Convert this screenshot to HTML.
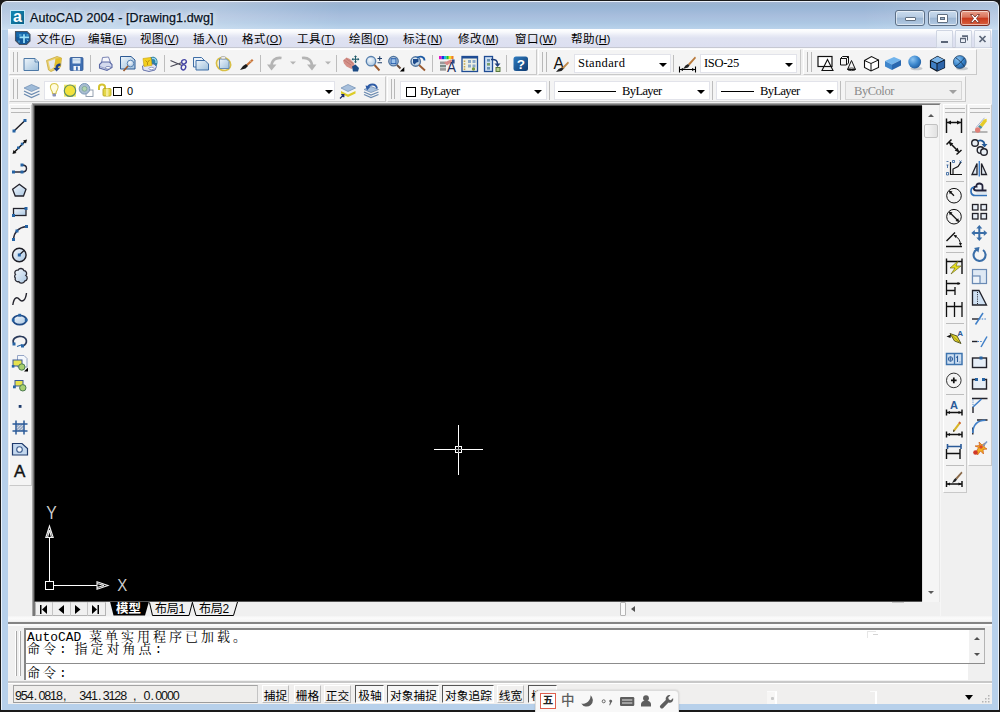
<!DOCTYPE html>
<html lang="zh-CN">
<head>
<meta charset="utf-8">
<title>AutoCAD 2004 - [Drawing1.dwg]</title>
<style>
*{box-sizing:border-box;margin:0;padding:0}
html,body{width:1000px;height:712px;overflow:hidden;background:#b9d1ea}
body{position:relative;font-family:"Liberation Sans","Noto Sans CJK SC",sans-serif;font-size:12px;color:#000}
.abs{position:absolute}
#frame{left:0;top:0;width:1000px;height:712px;background:#1a1a1a;}
#frame2{left:1px;top:1px;width:998px;height:709px;background:#b7d0ea;border-radius:6px 6px 0 0;border:1px solid #eaf2fb;border-bottom-color:#b7d0ea}
#title{left:2px;top:2px;width:996px;height:28px;border-radius:5px 5px 0 0;background:linear-gradient(90deg,rgba(255,255,255,.24) 0,rgba(255,255,255,.22) 215px,rgba(255,255,255,0) 340px,rgba(255,255,255,0) 860px,rgba(255,255,255,.22) 1000px),linear-gradient(#a3b5d1 0,#98b4d2 3px,#9db8d8 8px,#a8bedd 14px,#acc7e3 21px,#b7d1ea 26px,#bcd4ec 28px)}
#topline{display:none}
#titletext{left:30px;top:9.5px;font-size:12.5px;line-height:16px;color:#06121f;white-space:nowrap;letter-spacing:0.1px;text-shadow:0 0 5px #fff,0 0 8px #eaf2fa;-webkit-text-stroke:0.25px #06121f}
#menubar{left:8px;top:29px;width:984px;height:20px;background:linear-gradient(#ffffff 0,#f8f9fc 3px,#eaecf6 6px,#dfe2f1 9px,#dcdff0 18px,#c6c8d2 18px,#c6c8d2 19px,#fafafa 19px)}
.mi{position:absolute;top:31px;font-size:11.500px;line-height:16px;white-space:nowrap;color:#000;letter-spacing:0.500px}
.mi u{text-decoration:underline;text-underline-offset:1px}
#client{left:8px;top:49px;width:984px;height:655px;background:#f0f0f0}
.tb{position:absolute;background:#f4f4f4;border-right:1px solid #c9c9c9;border-bottom:1px solid #c9c9c9;border-top:1px solid #fff;border-left:1px solid #fff}
.grip{position:absolute;width:1px;background:#b8b8b8}
.sep{position:absolute;width:1px;background:#bdbdbd}
.combo{position:absolute;background:#fff;border:1px solid #e2e3ea;font-family:"Liberation Serif","Noto Serif CJK SC",serif;font-size:12.500px;line-height:17px;white-space:nowrap;letter-spacing:0.350px}
.arr{position:absolute;width:0;height:0;border-left:4px solid transparent;border-right:4px solid transparent;border-top:4px solid #000}


.cmd{position:absolute;font-family:"Liberation Mono","Noto Serif CJK SC",monospace;font-size:12.900px;line-height:14px;white-space:pre;color:#000}
.cmd .cj{font-size:13px;letter-spacing:3px}
.sb{position:absolute;top:685px;height:18px;font-size:11.700px;line-height:20px;text-align:center;white-space:nowrap;overflow:hidden;border:1px solid transparent;border-left-color:#fff;border-top-color:#fff;border-right-color:#bdbdbd;border-bottom-color:#bdbdbd;color:#000;background:#f0efee}
.sb.on{text-indent:1px;border-left-color:#555;border-top-color:#555;border-right-color:#fff;border-bottom-color:#fff;background:#f6f6f6}

.cap{border:1px solid #5c6f86;border-radius:3px;background:linear-gradient(#c9dbee 0,#b6cbe2 45%,#9cb6d3 50%,#b3cae3 100%);box-shadow:inset 0 0 0 1px rgba(255,255,255,.55)}
.mdib{width:17px;height:18px;border:1px solid #cfd5e2;background:linear-gradient(#f7f9fc,#e4e9f3);border-radius:1px}
.coord{font-family:"Liberation Sans",sans-serif;font-size:12.500px;line-height:16px;white-space:pre;color:#111}
.coord i{display:inline-block;width:5.850px;text-align:center;font-style:normal}
.mi .p{letter-spacing:0.200px;font-size:10.800px}
</style>
</head>
<body>
<div id="frame" class="abs"></div><div id="frame2" class="abs"></div>
<div id="title" class="abs"></div>
<div id="topline" class="abs"></div>
<div id="titletext" class="abs">AutoCAD 2004 - [Drawing1.dwg]</div>
<div id="menubar" class="abs"></div>
<!-- ===== title buttons ===== -->
<div class="abs" style="left:10px;top:10px;width:15px;height:15px;background:linear-gradient(135deg,#1488b2,#0a6088);border:1px solid #c4e8f8"></div>
<div class="abs" style="left:11.500px;top:6.500px;width:12px;font-size:16px;line-height:20px;font-weight:bold;color:#fff;text-align:center">a</div>
<div class="abs cap" style="left:895px;top:10px;width:30px;height:16px"></div>
<div class="abs cap" style="left:928px;top:10px;width:30px;height:16px"></div>
<div class="abs cap" style="left:960px;top:10px;width:30px;height:16px;background:linear-gradient(#e9a08c 0,#d9735b 45%,#c8381c 50%,#d8603e 100%);border-color:#7a2c22"></div>
<div class="abs" style="left:905px;top:17px;width:11px;height:4px;background:#fff;border:1px solid #5f6e80;border-radius:1px"></div>
<div class="abs" style="left:937px;top:14px;width:11px;height:9px;background:#fff;border:1px solid #5f6e80;border-radius:1px"></div>
<div class="abs" style="left:940px;top:17px;width:5px;height:3px;background:#9cb0c8;border:1px solid #5f6e80"></div>
<svg class="abs" style="left:968px;top:12px" width="14" height="13" viewBox="0 0 14 13"><path d="M2.500 2.500L4.800 2.500L7 5L9.200 2.500L11.500 2.500L8.500 6.500L11.500 10.500L9.200 10.500L7 8L4.800 10.500L2.500 10.500L5.500 6.500Z" fill="#fff" stroke="#7a3a30" stroke-width="0.900" stroke-linejoin="round"/></svg>
<!-- MDI icon + buttons -->
<svg class="abs" style="left:14px;top:30px" width="18" height="16" viewBox="14 30 18 16"><path d="M15.500 31.500H27L30 34.500V41L26.500 44.500H19.500L15.500 40.500Z" fill="#125a9c" stroke="#4a5666" stroke-width="1.100"/><path d="M16.500 32.500H26.500L29 35V37H16.500Z" fill="#1c74b8" opacity="0.600"/><path d="M19.500 37.400H29M24 34.200V43" stroke="#9fe2f8" stroke-width="1.700" fill="none"/><path d="M19 35H21.500M26.500 35H28.500M19 40.500V42.500M27 39.500L28 41" stroke="#6cc0ea" stroke-width="1" fill="none"/></svg>
<div class="abs mdib" style="left:936px;top:30px"></div><div class="abs mdib" style="left:955px;top:30px"></div><div class="abs mdib" style="left:974px;top:30px"></div>
<div class="abs" style="left:941px;top:41px;width:7px;height:2px;background:#5b6678"></div>
<svg class="abs" style="left:955px;top:31px" width="36" height="17" viewBox="0 0 36 17"><path d="M7.500 5.500H12.500V9.500M5.500 7.500H10.500V11.500H5.500Z" fill="none" stroke="#5b6678" stroke-width="1"/><path d="M7 5H13M5 7.500H11" stroke="#5b6678" stroke-width="1.600"/><path d="M24.500 5L30.500 11M30.500 5L24.500 11" stroke="#5b6678" stroke-width="1.700"/></svg>


<!-- menu items -->
<div class="mi" style="left:37px">文件<span class="p">(<u>F</u>)</span></div>
<div class="mi" style="left:88px">编辑<span class="p">(<u>E</u>)</span></div>
<div class="mi" style="left:140px">视图<span class="p">(<u>V</u>)</span></div>
<div class="mi" style="left:193px">插入<span class="p">(<u>I</u>)</span></div>
<div class="mi" style="left:242px">格式<span class="p">(<u>O</u>)</span></div>
<div class="mi" style="left:297px">工具<span class="p">(<u>T</u>)</span></div>
<div class="mi" style="left:349px">绘图<span class="p">(<u>D</u>)</span></div>
<div class="mi" style="left:403px">标注<span class="p">(<u>N</u>)</span></div>
<div class="mi" style="left:458px">修改<span class="p">(<u>M</u>)</span></div>
<div class="mi" style="left:515px">窗口<span class="p">(<u>W</u>)</span></div>
<div class="mi" style="left:571px">帮助<span class="p">(<u>H</u>)</span></div>
<div id="client" class="abs"></div>

<!-- ===== toolbars row 1 ===== -->
<div class="tb" style="left:9px;top:49px;width:528px;height:26px"></div>
<div class="grip" style="left:13px;top:52px;height:20px"></div><div class="grip" style="left:17px;top:52px;height:20px"></div>
<div class="tb" style="left:538px;top:49px;width:263px;height:26px"></div>
<div class="grip" style="left:542px;top:52px;height:20px"></div><div class="grip" style="left:546px;top:52px;height:20px"></div>
<div class="tb" style="left:803px;top:49px;width:174px;height:26px"></div>
<div class="grip" style="left:807px;top:52px;height:20px"></div><div class="grip" style="left:811px;top:52px;height:20px"></div>
<div class="sep" style="left:90px;top:55px;height:17px"></div>
<div class="sep" style="left:164px;top:55px;height:17px"></div>
<div class="sep" style="left:260px;top:55px;height:17px"></div>
<div class="sep" style="left:336px;top:55px;height:17px"></div>
<div class="sep" style="left:432px;top:55px;height:17px"></div>
<div class="sep" style="left:506px;top:55px;height:17px"></div>
<div class="sep" style="left:673px;top:55px;height:17px"></div>
<div class="combo" style="left:574px;top:54px;width:97px;height:19px;padding-left:3px">Standard</div><div class="arr" style="left:658.500px;top:62.500px"></div>
<div class="combo" style="left:700px;top:54px;width:97px;height:19px;padding-left:3px;letter-spacing:-0.300px">ISO-25</div><div class="arr" style="left:785px;top:62.500px"></div>
<!-- ===== toolbars row 2 ===== -->
<div class="tb" style="left:9px;top:76px;width:377px;height:26px"></div>
<div class="grip" style="left:13px;top:79px;height:20px"></div><div class="grip" style="left:17px;top:79px;height:20px"></div>
<div class="tb" style="left:387px;top:76px;width:579px;height:26px"></div>
<div class="grip" style="left:391px;top:79px;height:20px"></div><div class="grip" style="left:394px;top:79px;height:20px"></div>
<div class="combo" style="left:44px;top:81px;width:291px;height:19px;line-height:19px"></div><div class="arr" style="left:325px;top:90px"></div>
<div class="combo" style="left:400px;top:81px;width:147px;height:19px;padding-left:19px;line-height:19px;letter-spacing:-0.600px">ByLayer</div><div class="arr" style="left:534px;top:90px"></div>
<div class="combo" style="left:554px;top:81px;width:156px;height:19px;padding-left:67px;line-height:19px;letter-spacing:-0.600px">ByLayer</div><div class="arr" style="left:697px;top:90px"></div>
<div class="combo" style="left:716px;top:81px;width:122px;height:19px;padding-left:43px;line-height:19px;letter-spacing:-0.600px">ByLayer</div><div class="arr" style="left:826px;top:90px"></div>
<div class="combo" style="left:845px;top:81px;width:117px;height:19px;padding-left:8px;background:#f0f0f0;color:#8a8a8a;border-color:#d5d5d5;line-height:19px;letter-spacing:-0.450px">ByColor</div><div class="arr" style="left:949px;top:90px;border-top-color:#a0a0a0"></div>
<div class="sep" style="left:549px;top:81px;height:19px"></div>
<div class="sep" style="left:712px;top:81px;height:19px"></div>
<div class="sep" style="left:840px;top:81px;height:19px"></div>
<div class="abs" style="left:406px;top:86.500px;width:10px;height:10px;border:1px solid #000;background:#fff"></div>
<div class="abs" style="left:558px;top:91px;width:58px;height:1px;background:#000"></div>
<div class="abs" style="left:721px;top:91px;width:33px;height:1px;background:#000"></div>
<div class="abs" style="left:113px;top:86.500px;width:9px;height:9px;border:1.500px solid #000;background:#fff"></div>
<div class="abs" style="left:127px;top:82.500px;font-family:'Liberation Sans',sans-serif;font-size:11px;line-height:17px">0</div>

<!-- ===== side toolbars ===== -->
<div class="tb" style="left:9px;top:104px;width:23px;height:382px"></div>
<div class="abs" style="left:11px;top:108px;width:19px;height:1px;background:#b8b8b8"></div><div class="abs" style="left:11px;top:112px;width:19px;height:1px;background:#b8b8b8"></div>
<div class="tb" style="left:943px;top:104px;width:24px;height:389px"></div>
<div class="abs" style="left:945px;top:108px;width:20px;height:1px;background:#b8b8b8"></div><div class="abs" style="left:945px;top:112px;width:20px;height:1px;background:#b8b8b8"></div>
<div class="tb" style="left:968px;top:104px;width:24px;height:362px"></div>
<div class="abs" style="left:970px;top:108px;width:20px;height:1px;background:#b8b8b8"></div><div class="abs" style="left:970px;top:112px;width:20px;height:1px;background:#b8b8b8"></div>
<div class="abs" style="left:946px;top:181px;width:18px;height:1px;background:#bdbdbd"></div>
<div class="abs" style="left:946px;top:252px;width:18px;height:1px;background:#bdbdbd"></div>
<div class="abs" style="left:946px;top:323px;width:18px;height:1px;background:#bdbdbd"></div>
<div class="abs" style="left:946px;top:394px;width:18px;height:1px;background:#bdbdbd"></div>
<div class="abs" style="left:946px;top:465px;width:18px;height:1px;background:#bdbdbd"></div>
<!-- ===== MDI client border + scrollbars ===== -->
<div class="abs" style="left:32px;top:103px;width:909px;height:516px;background:#f0f0f0;border-top:1px solid #a6a6a6;border-left:1px solid #a6a6a6;border-right:1px solid #f6f6f6;border-bottom:1px solid #f6f6f6"></div>
<div class="abs" style="left:33px;top:104px;width:907px;height:514px;border-top:2px solid #787878;border-left:2px solid #787878;border-right:1px solid #ececec;border-bottom:1px solid #f0f0f0"></div>
<div id="vscroll" class="abs" style="left:922px;top:105px;width:18px;height:497px;background:#f5f5f5;border-left:1px solid #fbfbfb;border-right:1px solid #e6e6e6"></div>
<div class="abs" style="left:924px;top:124px;width:14px;height:14px;border:1px solid #c2c2c2;border-radius:2px;background:linear-gradient(90deg,#f8f8f8,#e2e2e2)"></div>
<div class="abs" style="left:928px;top:113.500px;width:0;height:0;border-left:3.500px solid transparent;border-right:3.500px solid transparent;border-bottom:3.500px solid #5a5a5a"></div>
<div class="abs" style="left:928px;top:591px;width:0;height:0;border-left:3.500px solid transparent;border-right:3.500px solid transparent;border-top:3.500px solid #5a5a5a"></div>
<div id="hrow" class="abs" style="left:35px;top:602px;width:905px;height:16px;background:#f0f0f0"></div>

<!-- ===== top toolbar icons ===== -->
<svg class="abs" style="left:0;top:49px" width="1000" height="55" viewBox="0 49 1000 55">
<defs>
<linearGradient id="gpage" x1="0" y1="0" x2="1" y2="1"><stop offset="0" stop-color="#eef5fb"/><stop offset="1" stop-color="#9fc0dc"/></linearGradient>
<radialGradient id="gsph" cx="0.35" cy="0.3" r="0.8"><stop offset="0" stop-color="#8cc4f2"/><stop offset="0.55" stop-color="#3a86cc"/><stop offset="1" stop-color="#1d5596"/></radialGradient>
<radialGradient id="glens" cx="0.4" cy="0.35" r="0.7"><stop offset="0" stop-color="#f4f8fc"/><stop offset="1" stop-color="#a8c4de"/></radialGradient>
<linearGradient id="ghelp" x1="0" y1="0" x2="1" y2="1"><stop offset="0" stop-color="#2f7cc0"/><stop offset="1" stop-color="#0e3a70"/></linearGradient>
</defs>
<!-- new -->
<path d="M24 58.500H35L38.500 62V70.500H24Z" fill="url(#gpage)" stroke="#4c78a6" stroke-width="1"/><path d="M35 58.500V62H38.500" fill="#c7d9ea" stroke="#4c78a6" stroke-width="0.800"/>
<!-- open -->
<path d="M46.500 60.500L57 56.500L61.500 58L60.500 67L51 71.500L48.500 70Z" fill="#e9d070" stroke="#c9a93a" stroke-width="0.800"/>
<path d="M48.500 61.500L55.500 59L54 67L50.500 69.500Z" fill="#e8eaee"/>
<path d="M55.500 58.500L61 58L60 67L54.500 66Z" fill="#e2bf2c"/>
<path d="M60.500 63.500C57 63.500 55.500 65.500 55.500 68L53.500 68L56.500 71.500L60 68L58 68C58 66.500 59 65.800 60.500 65.800Z" fill="#1e3f86"/>
<!-- save -->
<rect x="70" y="57.500" width="13" height="13" rx="1" fill="#3f6fb2" stroke="#2f5794" stroke-width="0.800"/><rect x="72.500" y="58" width="8" height="5.500" fill="#d7e6f4"/><path d="M72.500 60H80.500" stroke="#a9c3e0" stroke-width="0.700"/><rect x="73.500" y="66" width="6.500" height="4.500" fill="#eef3fa"/><rect x="76" y="66.500" width="1.800" height="4" fill="#3f6fb2"/>
<!-- print -->
<path d="M101.500 63L102.500 57.500L108.500 57L110.500 62.500Z" fill="#f6f6fb" stroke="#7a84b4" stroke-width="1"/>
<path d="M99.500 64.500L102 62H109.500L112 64.500V67.500L107 70.500L99.500 68Z" fill="#d4daee" stroke="#5a68a4" stroke-width="1.100"/>
<path d="M100 66.500L107 69L111.500 66.500" stroke="#8a94c0" stroke-width="0.800" fill="none"/>
<ellipse cx="108" cy="67.800" rx="2.600" ry="1.300" fill="#fff" stroke="#5a68a4" stroke-width="0.700"/>
<!-- preview -->
<path d="M120.500 56.500H131L135 60V69H120.500Z" fill="url(#gpage)" stroke="#2d5a94" stroke-width="1"/>
<circle cx="130.500" cy="63.500" r="3.300" fill="url(#glens)" stroke="#5a84b4" stroke-width="1"/>
<path d="M128 66L123.500 71" stroke="#9a5a30" stroke-width="1.600"/>
<!-- publish -->
<path d="M150 57.500C154 55.500 158 58 157.500 63C157 67 154 69 151 68Z" fill="#2d83a8"/><path d="M152 58.500C155 58 156.500 60 156 63" stroke="#a4d8ec" stroke-width="1.300" fill="none"/>
<path d="M142.500 66L145 64H154L156.500 66.500L155 70L149 71.500L143 70Z" fill="#dfe3f3" stroke="#5a68a4" stroke-width="0.900"/>
<rect x="143.500" y="58" width="8" height="8" fill="#f2cf1e" stroke="#caa514" stroke-width="0.600" transform="rotate(-8 147 62)"/>
<path d="M145.500 60.500L147.500 62.500L149.500 60M147.500 62.500V65" stroke="#b88a10" stroke-width="0.900" fill="none"/>
<ellipse cx="151.500" cy="68.500" rx="2.600" ry="1.200" fill="#fff" stroke="#5a68a4" stroke-width="0.600"/>
<!-- cut -->
<path d="M170.500 60.500L182 65.500M170.500 66.500L182 62.500" stroke="#4a4a58" stroke-width="1.300"/>
<ellipse cx="184" cy="61.800" rx="2.400" ry="2" fill="none" stroke="#4646a4" stroke-width="1.400" transform="rotate(-25 184 61.800)"/>
<ellipse cx="183.500" cy="67.300" rx="2.200" ry="2.600" fill="none" stroke="#4646a4" stroke-width="1.400" transform="rotate(20 183.500 67.300)"/>
<!-- copy -->
<path d="M193.500 57.500H201.500L204.500 60.500V67H193.500Z" fill="#e9f1f9" stroke="#3f6ea6" stroke-width="1"/>
<path d="M196 60.500H205L208.500 64V70H196Z" fill="url(#gpage)" stroke="#3f6ea6" stroke-width="1"/>
<!-- paste -->
<ellipse cx="223.500" cy="64" rx="7.300" ry="6.300" fill="#f4efd4" stroke="#d8bf46" stroke-width="1.600" transform="rotate(25 223.500 64)"/>
<path d="M219.500 59H226.500L229 61.500V68.500H219.500Z" fill="url(#gpage)" stroke="#5a82b0" stroke-width="0.900"/>
<rect x="221" y="56.500" width="4.500" height="2.500" rx="1" fill="#eee" stroke="#9a9a9a" stroke-width="0.600"/>
<!-- matchprop brush -->
<path d="M246 64.500L252 59L253.500 60.500L247.500 66Z" fill="#c8743a"/><path d="M250 60.700L251.500 62.200" stroke="#f0d0a0" stroke-width="0.800"/>
<path d="M240 70L243 66L246 64L248 66L245.500 68.500Z" fill="#1c1c1c"/>
<!-- undo/redo -->
<path d="M281.500 58C275 57 271.500 61 271.500 66" stroke="#b4b4b4" stroke-width="2.600" fill="none"/><path d="M267 64.500H276.500L271.500 70.500Z" fill="#b4b4b4"/>
<path d="M290 61.500H296L293 64.500Z" fill="#b4b4b4"/>
<path d="M302 58C308.500 57 312 61 312 66" stroke="#b4b4b4" stroke-width="2.600" fill="none"/><path d="M307 64.500H316.500L312 70.500Z" fill="#b4b4b4"/>
<path d="M325 61.500H331L328 64.500Z" fill="#b4b4b4"/>
<!-- pan -->
<path d="M343 60.500L346.500 57.500L350 59L354 63L355 66.500L351.500 69L346.500 66.500L344 63.500Z" fill="#d49088"/>
<path d="M344 60L351 65M346 58.500L353 63.500" stroke="#b8706a" stroke-width="0.700"/>
<path d="M352 66.500L355.500 64.500L359 68L358 71.500H353Z" fill="#1c4a84"/>
<path d="M355.500 56V62.500M352.300 59.200H358.700" stroke="#1f5a6a" stroke-width="1.100"/><path d="M355.500 55.300L357 57H354ZM355.500 63.200L357 61.500H354ZM351.600 59.200L353.300 57.700V60.700ZM359.400 59.200L357.700 57.700V60.700Z" fill="#1f5a6a"/>
<!-- zoom realtime -->
<circle cx="371" cy="61.200" r="4.700" fill="url(#glens)" stroke="#5880ae" stroke-width="1.400"/><path d="M374.500 65L379.500 70.500" stroke="#9a5a30" stroke-width="1.900"/>
<path d="M377.500 58.500H382M379.700 56.200V60.800M377.500 62.800H382" stroke="#1f3f6a" stroke-width="1.100"/>
<!-- zoom window -->
<circle cx="393.500" cy="61.200" r="4.700" fill="url(#glens)" stroke="#50749e" stroke-width="1.400"/><rect x="391" y="58.700" width="5" height="5" fill="#9ec4ea" stroke="#1f57a8" stroke-width="1"/><path d="M397 65L400.500 68.500" stroke="#6a5040" stroke-width="1.900"/><path d="M404.300 67V71.500H399.800Z" fill="#000"/>
<!-- zoom previous -->
<circle cx="415.700" cy="61.500" r="4.700" fill="url(#glens)" stroke="#50749e" stroke-width="1.400"/><path d="M419 65L425 70.500" stroke="#9a5a30" stroke-width="1.900"/>
<path d="M413 59H418.500V62L416.500 62.500L414.500 64.500L413 63Z" fill="#1c4a8c"/><path d="M417 58C420 55.500 424.500 56.500 424.500 60.500" stroke="#1c5aa4" stroke-width="1.800" fill="none"/>
<!-- properties -->
<rect x="439" y="56" width="2.600" height="3.200" fill="#e010c0"/><rect x="441.600" y="56" width="2.400" height="3.200" fill="#2030e0"/><rect x="444" y="56" width="2.400" height="3.200" fill="#10c0e0"/><rect x="446.400" y="56" width="2.400" height="3.200" fill="#20c030"/><rect x="448.800" y="56" width="2.400" height="3.200" fill="#f0e020"/><rect x="451.200" y="56" width="2.300" height="3.200" fill="#f08020"/>
<rect x="440" y="61.500" width="6" height="2.600" fill="#9a9a9a"/><rect x="440" y="64.800" width="6" height="2.600" fill="#7c8c88"/><rect x="440" y="68.100" width="6" height="2.600" fill="#9a9a9a"/>
<path d="M444 62.500L451 59.500L453 61L447 65.500Z" fill="#d88a88"/>
<text x="451.500" y="71.800" font-family="Liberation Sans, sans-serif" font-size="15" fill="#1c2c5c" text-anchor="middle" textLength="9" lengthAdjust="spacingAndGlyphs">A</text><rect x="452" y="59.500" width="2.600" height="4" fill="#2c4a88"/>
<!-- design center -->
<rect x="462" y="56.500" width="15.500" height="15" fill="#eef0e4" stroke="#1f4c94" stroke-width="1.300"/><rect x="462" y="56.500" width="15.500" height="2" fill="#1f4c94"/>
<path d="M464.500 60.500V70" stroke="#c8a850" stroke-width="1.600" stroke-dasharray="1.500 1.200"/>
<rect x="468" y="60" width="3" height="3" fill="#8aa8c8"/><rect x="472.500" y="60" width="3" height="3" fill="#8aa8c8"/><rect x="468" y="64.500" width="3" height="3" fill="#8aa8c8"/><rect x="472.500" y="64.500" width="3" height="3" fill="#8aa8c8"/><circle cx="473.500" cy="69" r="1.700" fill="#7a9a40"/>
<!-- tool palettes -->
<rect x="484.500" y="56.500" width="8" height="15" fill="#cfe0f2" stroke="#1f4c94" stroke-width="1.300"/><rect x="487" y="59" width="3" height="2.600" fill="#6a94b8"/><rect x="487" y="63" width="3" height="2.600" fill="#7aa06a"/><rect x="487" y="67" width="3" height="2.600" fill="#6a94b8"/>
<path d="M491 59.500C496 59 497.500 61 497.500 64" stroke="#1f3f7c" stroke-width="1.500" fill="none"/><path d="M494.500 63.500H500.500L497.500 67Z" fill="#1f3f7c"/><rect x="496" y="67.500" width="4" height="4" fill="#b8d090" stroke="#4a6a30" stroke-width="0.900"/>
<!-- help -->
<rect x="513.500" y="56.500" width="14.500" height="14.500" rx="2.500" fill="url(#ghelp)"/>
<text x="520.800" y="68.500" font-family="Liberation Sans, sans-serif" font-weight="bold" font-size="13.500" fill="#fff" text-anchor="middle">?</text>
<!-- text style -->
<text x="558.800" y="68.500" font-family="Liberation Sans, sans-serif" font-size="17" fill="#111" text-anchor="middle" textLength="10.500" lengthAdjust="spacingAndGlyphs">A</text>
<path d="M568 61.500L562 67.500L563.500 69L569 63Z" fill="#c08a4a"/><path d="M556 72L558.500 69L562 67.500L563.500 69L561.500 71Z" fill="#222"/>
<!-- dim style -->
<path d="M695 56.500L688 64L689.500 65.500L696 58Z" fill="#b8783a"/><path d="M683 69L685.500 65.500L688 64L689.500 65.500L688 67.500Z" fill="#222"/>
<path d="M679.500 69.500H695.500M679.500 66.500V72.500M695.500 66.500V72.500" stroke="#000" stroke-width="1.100"/><path d="M680 69.500L683 68V71ZM695 69.500L692 68V71Z" fill="#000"/>
<!-- shade toolbar -->
<rect x="818" y="56.500" width="14" height="10" fill="#fff" stroke="#111" stroke-width="1.200"/><path d="M827.500 59.500L822 70.500H833Z" fill="none" stroke="#111" stroke-width="1.100"/><path d="M824 66.500H831" stroke="#111" stroke-width="0.800"/>
<path d="M840.500 58.500H846.500V65H840.500ZM840.500 58.500L842.500 56.500H848.500V63L846.500 65M846.500 58.500L848.500 56.500" fill="none" stroke="#111" stroke-width="1"/><path d="M851.500 60.500L847.500 69.500H855.500Z" fill="#f4f4f4" stroke="#111" stroke-width="1"/><ellipse cx="851.500" cy="69.300" rx="4" ry="1.300" fill="none" stroke="#111" stroke-width="0.800"/>
<path d="M864.500 60.500L871.500 56.500L878.500 60V67.500L871 71L864.500 67.500Z" fill="#fff" stroke="#111" stroke-width="1.100"/><path d="M864.500 60.500L871 63.500L878.500 60M871 63.500V71" fill="none" stroke="#111" stroke-width="1"/>
<path d="M885 61L894 57L901 60L892 64.500Z" fill="#72b4ec"/><path d="M885 61L892 64.500V70L885 66.500Z" fill="#3f86cc"/><path d="M892 64.500L901 60V65.500L892 70Z" fill="#2a68b0"/>
<ellipse cx="916.500" cy="68.500" rx="6" ry="1.800" fill="#c4c8cc"/><circle cx="914.700" cy="62" r="6.400" fill="url(#gsph)"/>
<path d="M930.500 60.500L937.500 56.500L944.500 60V67.500L937 71L930.500 67.500Z" fill="#3f7fc4" stroke="#0c1420" stroke-width="1.200"/><path d="M930.500 60.500L937.500 56.500L944.500 60L937 63.500Z" fill="#7ab4e8"/><path d="M937 63.500L944.500 60V67.500L937 71Z" fill="#2d64a8"/><path d="M930.500 60.500L937 63.500L944.500 60M937 63.500V71" fill="none" stroke="#0c1420" stroke-width="1"/>
<ellipse cx="962" cy="68.500" rx="6" ry="1.800" fill="#c4c8cc"/><circle cx="959.800" cy="62" r="6.400" fill="url(#gsph)" stroke="#2a4a6c" stroke-width="0.800"/><path d="M955.500 57.500C959 60 962 63 964.500 66.500M964.500 58C962 61 958.500 65 955 66.500" stroke="#1c3a5c" stroke-width="0.900" fill="none"/>
<!-- layer toolbar -->
<path d="M24 88L31.500 84.500L39.500 88L31.500 91.500Z" fill="#9fbbd8" stroke="#6a8ab0" stroke-width="0.700"/><path d="M24 91L31.500 94.500L39.500 91M24 94L31.500 97.500L39.500 94" fill="none" stroke="#6a8ab0" stroke-width="1.300"/>
<path d="M54.200 83.500C50.500 83.500 49.500 87 51 89.500C52 91 52.500 92 52.500 93.500H56C56 92 56.500 91 57.500 89.500C59 87 58 83.500 54.200 83.500Z" fill="#fffce0" stroke="#d8c648" stroke-width="1.100"/><rect x="52.500" y="93.500" width="3.500" height="3" rx="0.800" fill="#8a92b8"/>
<rect x="64" y="84.700" width="12" height="12" fill="#f0e868"/><circle cx="70" cy="90.700" r="5.700" fill="#f2e23c" stroke="#5e8e68" stroke-width="1.200"/>
<rect x="86" y="90" width="7" height="6.500" fill="#fff" stroke="#8a98a8" stroke-width="0.900"/><circle cx="84.500" cy="88.800" r="5.300" fill="#a8bcd0" stroke="#7a98b8" stroke-width="1"/><circle cx="84.500" cy="88.800" r="2.400" fill="#b4d4b0" stroke="#7aa890" stroke-width="0.800"/>
<path d="M99 90V87C99 83.500 105 83.500 105 87V88.500" fill="none" stroke="#d4c230" stroke-width="2"/><rect x="103" y="88.500" width="8" height="7.500" rx="1" fill="#e4d648" stroke="#b8a620" stroke-width="0.900"/><rect x="106" y="88.500" width="2.500" height="7.500" fill="#f4ec98"/>
<path d="M341 88L348 84.500L355.500 88L348 91.500Z" fill="#a8c0dc" stroke="#6a8ab0" stroke-width="0.700"/><path d="M341 91L348 94.500L355.500 91L355.500 93.500L348 97L341 93.500Z" fill="#dccc28"/><path d="M340 98.500L343.500 95M343.800 97.300V94.700H341.200" stroke="#1c2c6c" stroke-width="1.200" fill="none"/>
<path d="M364 89.500L371 86.500L378.500 89.500L371 92.500Z" fill="#a8c0dc" stroke="#6a8ab0" stroke-width="0.700"/><path d="M364 92L371 95L378.500 92M364 94.500L371 97.500L378.500 94.500" fill="none" stroke="#6a8ab0" stroke-width="1.300"/>
<path d="M367.500 88C369 83.500 376 83 377 88.500" stroke="#2c5aa4" stroke-width="1.800" fill="none"/><path d="M365.500 85.500L370.500 86.500L367 90.500Z" fill="#2c5aa4"/>
</svg>

<!-- ===== left toolbar icons ===== -->
<svg class="abs" style="left:8px;top:112px" width="26" height="376" viewBox="8 112 26 376">
<defs><linearGradient id="glb" x1="0" y1="0" x2="1" y2="1"><stop offset="0" stop-color="#f4f8fc"/><stop offset="1" stop-color="#a9c6e2"/></linearGradient></defs>
<g fill="#2563a4">
<path d="M14 131L25 120.500" stroke="#1a1a22" stroke-width="1.400"/><rect x="12.500" y="129.500" width="3" height="3"/><rect x="23.500" y="119" width="3" height="3"/>
<path d="M14 152.500L25.500 141" stroke="#111" stroke-width="1.400"/><path d="M12.500 154L13.500 150L16.500 153ZM27 139.500L26 143.500L23 140.500Z" fill="#111"/><rect x="17" y="146.500" width="2.600" height="2.600"/><rect x="20.800" y="142.700" width="2.600" height="2.600"/>
<path d="M13.500 172H22C28 172 28 165 22 165" stroke="#2a2a3a" stroke-width="1.400" fill="none"/><rect x="12" y="170.500" width="3" height="3"/><rect x="20.500" y="170.500" width="3" height="3"/><rect x="20.500" y="163.500" width="3" height="3"/>
<path d="M19.300 184.300L26 189.300L23.500 196H15.200L12.600 189.300Z" fill="url(#glb)" stroke="#22222c" stroke-width="1.300"/>
<rect x="13.500" y="208.500" width="12.500" height="7" fill="url(#glb)" stroke="#22222c" stroke-width="1.300"/><rect x="24.500" y="207" width="3" height="3"/><rect x="12" y="214" width="3" height="3"/>
<path d="M13.500 239.500C14 232 19 227.500 26.500 226.500" stroke="#2a2a3a" stroke-width="1.400" fill="none"/><rect x="12" y="238" width="3" height="3"/><rect x="25" y="225" width="3" height="3"/><rect x="15.500" y="229.500" width="3" height="3"/>
<circle cx="19.300" cy="255" r="6.800" fill="url(#glb)" stroke="#1c1c24" stroke-width="1.400"/><path d="M19.300 255L24 250.500" stroke="#1c1c24" stroke-width="1.200"/><rect x="17.800" y="253.500" width="3" height="3"/>
<path d="M15.500 274.500a2.600 2.600 0 0 1 2.500-4.300a3.300 3.300 0 0 1 6 0.500a2.800 2.800 0 0 1 1.800 4.800a3 3 0 0 1-1 5.500a3.400 3.400 0 0 1-6 0.600a2.800 2.800 0 0 1-3.500-3.600a2.400 2.400 0 0 1 0.200-3.500z" fill="url(#glb)" stroke="#2a2a34" stroke-width="1.300"/>
<path d="M12.800 305C14 297 17 296.500 19.500 299.500S25.500 301 26.500 293" stroke="#22222c" stroke-width="1.400" fill="none"/>
<ellipse cx="19.700" cy="320" rx="6.800" ry="4.600" fill="url(#glb)" stroke="#1e4a86" stroke-width="1.800"/><rect x="18.300" y="313.800" width="2.800" height="2.800"/><rect x="11.800" y="318.600" width="2.800" height="2.800"/><rect x="24.800" y="318.600" width="2.800" height="2.800"/>
<path d="M14 344C11 339 17 335.500 21.500 336.500C27.500 337.500 28 343.500 23 346" stroke="#2a3a5a" stroke-width="1.700" fill="none"/><rect x="12.500" y="342.500" width="3" height="3"/><rect x="21" y="344.500" width="3" height="3"/><path d="M17 346.500L22.500 344.500" stroke="#2563a4" stroke-width="1.200"/>
<path d="M17.500 355.500H24L27 358.500V367H17.500Z" fill="#f4f7fb" stroke="#8a9cc0" stroke-width="0.900"/><rect x="13" y="360" width="9" height="6" fill="#e6e24c" stroke="#3a5a94" stroke-width="1"/><circle cx="21.800" cy="367" r="3.200" fill="#a8d070" stroke="#4a7a50" stroke-width="1"/><rect x="11.800" y="365" width="2.600" height="2.600"/><path d="M28 367.500V371.500H24Z" fill="#000"/>
<rect x="15" y="380.500" width="8" height="5.500" fill="#e6e24c" stroke="#3a5a94" stroke-width="1"/><circle cx="22.800" cy="387.800" r="3.200" fill="#a8d070" stroke="#4a7a50" stroke-width="1"/><rect x="13" y="385.500" width="2.800" height="2.800"/>
<rect x="18.700" y="405" width="2.800" height="2.800" fill="#1c3a6c"/>
<rect x="16.500" y="424" width="7" height="7" fill="#c8d4e4"/><path d="M16.500 427L19.500 424M16.500 430L22.500 424M18.500 431L23.500 426M21.500 431L23.500 429" stroke="#5a6a8a" stroke-width="0.700"/>
<path d="M16 420.500V434.500M24 420.500V434.500M12.500 424H27.500M12.500 431H27.500" stroke="#2a5a98" stroke-width="1.500"/>
<path d="M12.500 443.500H22L27.500 448.500V455H12.500Z" fill="#c4d8ee" stroke="#1e3a6c" stroke-width="1.200"/><circle cx="19.500" cy="449.500" r="2.800" fill="#f4f8fc" stroke="#3a5a8c" stroke-width="1.100"/>
</g>
<text x="19.700" y="476.500" font-family="Liberation Sans, sans-serif" font-size="17" fill="#111" stroke="#111" stroke-width="0.400" text-anchor="middle">A</text>
</svg>

<!-- ===== right toolbar icons ===== -->
<svg class="abs" style="left:942px;top:112px" width="50" height="384" viewBox="942 112 50 384">
<g stroke="#111" stroke-width="1.450" fill="none">
<path d="M946.500 118.500V133M961.500 118.500V133M947 122.500H961"/><path d="M947 122.500L951 120.500V124.500ZM961 122.500L957 120.500V124.500Z" fill="#111" stroke="none"/>
<path d="M949.500 142.500L958.500 151.500M946.500 144.500L951.500 139.500M956.500 154.500L961.500 150"/><path d="M949 142L953.300 143.200L950.200 146.300ZM959 152L954.700 150.800L957.800 147.700Z" fill="#111" stroke="none"/>
<path d="M950.500 162V174.500H962M953 174.500V169L958 166.500L961 162" stroke-width="1.200"/>
<path d="M946.500 161.500H948.500M946.500 165H948.500M947.500 165V168M946.500 172.500H948.500V175H946.500ZM952.500 160.500H954.500V162.500H952.500ZM959.500 160.500L961.500 163M961.500 160.500L959.500 163" stroke="#2a5a98" stroke-width="0.800"/>
<circle cx="954" cy="195.700" r="7.300" stroke-width="1"/><path d="M954 195.700L950.500 192.200" stroke-width="1.300"/><path d="M948.800 190.500L952.500 191.500L949.800 194.200Z" fill="#111" stroke="none"/>
<circle cx="954" cy="216.700" r="7.300" stroke-width="1"/><path d="M950 212.700L958 220.700" stroke-width="1.300"/><path d="M948.800 211.500L952.500 212.500L949.800 215.200ZM959.200 221.900L955.500 220.900L958.200 218.200Z" fill="#111" stroke="none"/>
<path d="M962 246.500H946M946.500 241L955 232.500" stroke-width="1.400"/><path d="M954.500 235.500C958.500 237.500 960.500 241 960.500 245" stroke-width="1"/><path d="M953.500 235L957 235.200L955.500 238ZM960.500 246L959 243H962Z" fill="#111" stroke="none"/>
<path d="M946.500 258.500V274M962 258.500V274M947 261.500H961.500" stroke-width="1.400"/>
<path d="M946.500 280V295M955 287V295M947 283.500H960M947 290.500H955" stroke-width="1.300"/><path d="M960.500 283.500L957.500 282V285Z" fill="#111" stroke="none"/>
<path d="M946.500 302V317M954.500 302V317M962 302V317M947 306.500H962" stroke-width="1.300"/>
<circle cx="953.800" cy="380.400" r="7.300" stroke-width="1" stroke="#333"/><path d="M951 380.400H956.600M953.800 377.600V383.200" stroke-width="1.700"/>
<path d="M946.500 412.500H962M946.500 409.500V415.500M962 409.500V415.500"/><path d="M947 412.500L950 411V414ZM961.500 412.500L958.500 411V414Z" fill="#111" stroke="none"/>
<path d="M946.500 434.500H962M946.500 431.500V437.500M962 431.500V437.500"/><path d="M947 434.500L950 433V436ZM961.500 434.500L958.500 433V436Z" fill="#111" stroke="none"/>
<path d="M947.500 446.500H961M947.500 444V449M961 444V449" stroke="#2a5a98" stroke-width="1.600"/>
<path d="M946.500 453.500H960M946.500 449V459M960 449V459" stroke-width="1.400"/>
<path d="M946.500 484H962M946.500 481V487M962 481V487"/><path d="M947 484L950 482.500V485.500ZM961.500 484L958.500 482.500V485.500Z" fill="#111" stroke="none"/>
</g>
<!-- quick dim bolt -->
<path d="M958 261L950 268H955L951 274L961 266H956Z" fill="#e8e020" stroke="#5a5a10" stroke-width="0.600"/>
<!-- qleader -->
<path d="M950 333.500L957 336L961 343.500L954.500 341Z" fill="#e0d428" stroke="#3a3a10" stroke-width="0.800"/><path d="M946.500 336.500L951 334.500L950.500 338Z" fill="#111"/><path d="M952 335.500L959 342" stroke="#8a7a10" stroke-width="0.700"/>
<text x="960.200" y="336.200" font-family="Liberation Sans, sans-serif" font-size="8" font-weight="bold" fill="#2a5a98" text-anchor="middle">A</text>
<!-- tolerance -->
<rect x="946.500" y="353.500" width="15.500" height="11" fill="#cfe0f2" stroke="#3f74ae" stroke-width="1.500"/><path d="M954.500 353.500V364.500" stroke="#3f74ae" stroke-width="1.300"/><circle cx="950.500" cy="359" r="2.200" fill="none" stroke="#2a5a98" stroke-width="0.900"/><path d="M948 359H953M950.500 356.500V361.500" stroke="#2a5a98" stroke-width="0.700"/><path d="M957.500 362V356.500L956.300 357.700M959.500 362H960.300" stroke="#2a5a98" stroke-width="1.100" fill="none"/>
<!-- dim edit A -->
<text x="954" y="408.600" font-family="Liberation Sans, sans-serif" font-size="11" font-weight="bold" fill="#2a5a98" text-anchor="middle">A</text>
<!-- dim text edit pencil -->
<path d="M959.500 421.500L961 423L955 431L953 432L953.500 429.500Z" fill="#d8b428"/><path d="M959.500 421.500L961 423L960 424.300L958.500 422.800Z" fill="#d05848"/><path d="M953 432L953.500 429.500L955 431Z" fill="#333"/>
<!-- dim style brush -->
<path d="M961.500 471.500L955.500 478L957 479.500L962.500 473Z" fill="#8a6a4a"/><path d="M952 483L954 479.500L955.500 478L957 479.500L955.500 481.500Z" fill="#222"/>
<!-- ===== modify ===== -->
<path d="M972 132H987.500" stroke="#8a8a8a" stroke-width="1.200"/>
<path d="M979.600 124.900L983.900 119.400L986.700 118.700L986.700 121.600L982.400 127.100Z" fill="#e6cc2a"/><path d="M978 126.800L980.900 129L982.400 127.100L979.600 124.900Z" fill="#4f8fa0"/><circle cx="977.700" cy="130" r="2.700" fill="#e07f76"/><path d="M976 127.500L984.500 117.800" stroke="#8898c8" stroke-width="0.700"/>
<circle cx="975" cy="143" r="3.300" fill="#e8eef4" stroke="#22222a" stroke-width="1.400"/><circle cx="980.500" cy="150" r="3.300" fill="#e8eef4" stroke="#22222a" stroke-width="1.400"/><circle cx="984" cy="152" r="3.300" fill="#e8eef4" stroke="#22222a" stroke-width="1.400"/>
<path d="M978 141C981 139.500 984 141 984.500 144" stroke="#245a98" stroke-width="1.800" fill="none"/><path d="M981.500 144H987.500L984.500 147.500Z" fill="#245a98"/>
<path d="M977 163.500V174.500H972ZM981.500 163.500V174.500H986.500Z" fill="#dfe7f0" stroke="#22222a" stroke-width="1.300"/><path d="M979.300 161V176.500" stroke="#3f7fc8" stroke-width="1.400"/>
<path d="M986.500 190.500H976.500C973 190.500 973 186.500 976.500 186.500C975.500 182.500 983 182.500 982.500 186.500V190.500" fill="#eef3f9" stroke="#22223a" stroke-width="1.800"/><path d="M987 195.500H975.500C969.500 195.500 970 188 974 187" fill="none" stroke="#2f6fb8" stroke-width="1.700"/><path d="M976.500 193H987" stroke="#cfe0f2" stroke-width="1.300"/>
<g fill="#e8eef6" stroke="#22222a" stroke-width="1.300"><rect x="972.500" y="204.500" width="5.500" height="5.500"/><rect x="981" y="204.500" width="5.500" height="5.500"/><rect x="972.500" y="213.500" width="5.500" height="5.500"/><rect x="981" y="213.500" width="5.500" height="5.500"/></g>
<path d="M979.300 227V239M973.300 233H985.300" stroke="#3a6ea8" stroke-width="2"/><path d="M979.300 225L982.300 228.500H976.300ZM979.300 241L982.300 237.500H976.300ZM971.300 233L974.800 230V236ZM987.300 233L983.800 230V236Z" fill="#3a6ea8"/>
<path d="M977 249.500A6 6 0 1 0 983 250" stroke="#3a6ea8" stroke-width="2.100" fill="none"/><path d="M974 248L979.500 247L978.500 252.500Z" fill="#3a6ea8"/>
<rect x="972.500" y="269.500" width="14" height="14" fill="#dfe9f4" stroke="#6a8ab4" stroke-width="1.200"/><rect x="972.500" y="276" width="7.500" height="7.500" fill="#eef3f9" stroke="#6a8ab4" stroke-width="1.200"/>
<path d="M972.500 290.500H979L986.500 305H972.500Z" fill="#cfe0f2" stroke="#22222a" stroke-width="1.300"/><path d="M977.500 292V304" stroke="#22222a" stroke-width="1" stroke-dasharray="1 1.200"/>
<path d="M972 319H979" stroke="#22222a" stroke-width="1.400"/><path d="M979 319H987" stroke="#3f7fc8" stroke-width="1.200" stroke-dasharray="1.500 1.200"/><path d="M975.500 324.500L983 313" stroke="#3f7fc8" stroke-width="1.500"/>
<path d="M972 341.500H977.500" stroke="#22222a" stroke-width="1.400"/><path d="M977.500 341.500H982.500" stroke="#3f7fc8" stroke-width="1.200" stroke-dasharray="1.500 1.200"/><path d="M981 347L987 336.500" stroke="#3f7fc8" stroke-width="1.500"/>
<rect x="972.500" y="358" width="14" height="9.500" fill="#e6eef7" stroke="#22222a" stroke-width="1.400"/><rect x="979.500" y="356.500" width="3" height="3" fill="#2563a4"/>
<path d="M976.500 379.500H972.500V389H986.500V379.500H983" fill="#e6eef7" stroke="#22222a" stroke-width="1.400"/><rect x="975" y="378" width="3" height="3" fill="#2563a4"/><rect x="982" y="378" width="3" height="3" fill="#2563a4"/>
<path d="M972 398.500H987.500M973 407V413" stroke="#22222a" stroke-width="1.400"/><path d="M981.500 399L973 407" stroke="#3f7fc8" stroke-width="1.500"/><path d="M973 399.500V407" stroke="#3f7fc8" stroke-width="1" stroke-dasharray="1 1.200"/>
<path d="M977 420H987.500M972.800 427.500V434.500" stroke="#22222a" stroke-width="1.400"/><path d="M985.500 420.300C978 420.500 973 424 972.800 433" stroke="#3f7fc8" stroke-width="1.600" fill="none"/>
<path d="M976 452L978.500 447.500L975 446L979.500 445.500L979 442L982 445L985 443L984 447L987 449L983 449.500L983.500 454L980.500 451L977.500 455Z" fill="#f0b020" stroke="#d05818" stroke-width="0.700"/><circle cx="975.500" cy="452.500" r="2.300" fill="#d03828"/><circle cx="981" cy="447" r="1.800" fill="#e04828"/><path d="M983 446L987 441.500" stroke="#7a9ac8" stroke-width="1.500"/>
</svg>
<svg id="canvas" class="abs" style="left:30px;top:100px" width="900" height="510" viewBox="30 100 900 510"><rect x="34.450" y="105.550" width="887.650" height="496.100" fill="#000"/></svg>

<!-- ===== canvas content ===== -->
<svg class="abs" style="left:35px;top:106px" width="888" height="496" viewBox="35 106 888 496">
<g stroke="#fff" stroke-width="1" fill="none" shape-rendering="crispEdges">
<path d="M433.5 449.5H455M462 449.5H483M458.5 425V446M458.5 453V475"/>
<rect x="455.5" y="446.5" width="6" height="6"/>
<path d="M455 449.5H462M458.5 446V453" stroke="#bbb"/>
<rect x="45.500" y="581.500" width="8" height="8"/>
<path d="M49.500 581V537M54 585.500H97"/>
</g>
<g stroke="#f0f0f0" stroke-width="1.100" fill="none">
<path d="M49.500 526L45.800 537.500H53.200ZM49.500 530L47.500 537.500M49.500 530L51.500 537.500"/>
<path d="M108 585.500L97 581.800V589.200ZM104 585.500L97 583.500M104 585.500L97 587.500"/>

</g>
<text x="51.500" y="518.500" font-family="Liberation Sans, sans-serif" font-size="17.500" fill="#cdcdcd" text-anchor="middle" textLength="10.500" lengthAdjust="spacingAndGlyphs">Y</text>
<text x="122.300" y="591" font-family="Liberation Sans, sans-serif" font-size="16.500" fill="#cdcdcd" text-anchor="middle" textLength="10" lengthAdjust="spacingAndGlyphs">X</text>
</svg>
<!-- ===== tabs ===== -->
<div class="abs" style="left:35px;top:602px;width:71px;height:14px;background:#f0f0f0;border:1px solid #b4b4b4;border-top-color:#e0e0e0"></div>
<div class="abs" style="left:52px;top:602px;width:1px;height:14px;background:#c4c4c4"></div>
<div class="abs" style="left:70px;top:602px;width:1px;height:14px;background:#c4c4c4"></div>
<div class="abs" style="left:87px;top:602px;width:1px;height:14px;background:#c4c4c4"></div>
<svg class="abs" style="left:35px;top:602px" width="210" height="16" viewBox="35 602 210 16">
<g fill="#000"><rect x="40" y="605" width="1.500" height="9"/><path d="M47 605V614L42 609.500Z"/>
<path d="M64 605V614L58.500 609.500Z"/><path d="M75 605V614L80.500 609.500Z"/>
<path d="M92 605V614L97 609.500Z"/><rect x="97.500" y="605" width="1.500" height="9"/></g>
<path d="M110 601.500L113.500 615.500H145L149 601.500Z" fill="#000"/>
<path d="M149.500 602.500L152.500 615.500H189L192.500 602M192.500 603L196 615.500H233.500L237.500 602" fill="none" stroke="#000" stroke-width="1"/>
</svg>
<div class="abs" style="left:116px;top:600.500px;width:30px;font-size:12.500px;line-height:16px;color:#fff;font-weight:bold;white-space:nowrap">模型</div>
<div class="abs" style="left:155px;top:600.500px;font-size:12px;line-height:16px;white-space:nowrap;letter-spacing:-0.300px">布局1</div>
<div class="abs" style="left:199px;top:600.500px;font-size:12px;line-height:16px;white-space:nowrap;letter-spacing:-0.300px">布局2</div>
<div class="abs" style="left:620px;top:602px;width:6px;height:14px;border:1px solid #b5b5b5;background:#fafafa;border-radius:1px"></div>
<div class="abs" style="left:631px;top:606px;width:0;height:0;border-top:3.500px solid transparent;border-bottom:3.500px solid transparent;border-right:4px solid #505050"></div>

<!-- ===== command window ===== -->
<div class="abs" style="left:8px;top:616px;width:984px;height:5px;background:linear-gradient(#f4f4f4,#fbfbfb 40%,#f6f6f6)"></div>
<div class="abs" style="left:8px;top:622px;width:984px;height:2px;background:#848484"></div>
<div class="abs" style="left:8px;top:624px;width:984px;height:2px;background:#fbfbfb"></div>
<div class="abs" style="left:15px;top:631px;width:2px;height:45px;background:#fff;border-right:1px solid #a8a8a8"></div>
<div class="abs" style="left:19px;top:631px;width:2px;height:45px;background:#fff;border-right:1px solid #a8a8a8"></div>
<div class="abs" style="left:24px;top:628px;width:961px;height:36px;background:#fff;border-top:2px solid #858585;border-left:2px solid #858585"></div>
<div class="abs" style="left:24px;top:663px;width:961px;height:1px;background:#8c8c8c"></div>
<div class="abs" style="left:24px;top:664px;width:944px;height:16px;background:#fff;border-left:2px solid #858585"></div>
<div class="abs" style="left:969px;top:630px;width:16px;height:33px;background:#f1f1f1;border-right:1px solid #b4b4b4"></div>
<div class="abs" style="left:973.500px;top:637px;width:0;height:0;border-left:3.500px solid transparent;border-right:3.500px solid transparent;border-bottom:3.500px solid #505050"></div>
<div class="abs" style="left:973.500px;top:653px;width:0;height:0;border-left:3.500px solid transparent;border-right:3.500px solid transparent;border-top:3.500px solid #505050"></div>
<div class="cmd" style="left:27px;top:630.500px">AutoCAD <span class="cj">菜单实用程序已加载。</span></div>
<div class="cmd" style="left:27px;top:643px"><span class="cj">命令</span>: <span class="cj">指定对角点</span>:</div>
<div class="cmd" style="left:27px;top:667px"><span class="cj">命令</span>:</div>
<!-- ===== status bar ===== -->
<div class="abs" style="left:8px;top:681px;width:984px;height:2px;background:#c8c8c8"></div>
<div class="abs" style="left:8px;top:683px;width:984px;height:1px;background:#fff"></div>
<div class="abs" style="left:8px;top:684px;width:984px;height:20px;background:#f0efee"></div>
<div class="abs" style="left:13px;top:685px;width:245px;height:18px;border:1px solid #a4a4a4;border-right-color:#c4c4c4;border-bottom-color:#9c9c9c;background:#efeeec"></div>
<div class="abs coord" style="left:15px;top:687.500px"><i>9</i><i>5</i><i>4</i><i>.</i><i>0</i><i>8</i><i>1</i><i>8</i><i>,</i><i> </i><i> </i><i>3</i><i>4</i><i>1</i><i>.</i><i>3</i><i>1</i><i>2</i><i>8</i><i> </i><i>,</i><i> </i><i>0</i><i>.</i><i>0</i><i>0</i><i>0</i><i>0</i></div>
<div class="sb" style="left:262px;width:27px">捕捉</div>
<div class="sb" style="left:294px;width:27px">栅格</div>
<div class="sb" style="left:324px;width:27px">正交</div>
<div class="sb on" style="left:355px;width:29px">极轴</div>
<div class="sb on" style="left:387px;width:52px">对象捕捉</div>
<div class="sb on" style="left:442px;width:52px">对象追踪</div>
<div class="sb" style="left:497px;width:27px">线宽</div>
<div class="sb on" style="left:528px;width:29px">模型</div>
<div class="abs" style="left:965px;top:695px;width:0;height:0;border-left:4px solid transparent;border-right:4px solid transparent;border-top:5px solid #000"></div>

<!-- status pane remnants -->
<div class="abs" style="left:767px;top:691px;width:10px;height:13px;background:#f7f6f5;border-right:2px solid #fff;border-top:1px solid #fbfbfb"></div>
<div class="abs" style="left:771px;top:697px;width:3px;height:3px;background:#c9c9c9;border-radius:1px"></div>
<div class="abs" style="left:870px;top:691px;width:7px;height:13px;border-right:2px solid #fff;border-top:1px solid #fbfbfb"></div>
<div class="abs" style="left:867px;top:631px;width:9px;height:7px;border-left:1px solid #e6e6e6;border-top:1px solid #e6e6e6"></div>
<div class="abs" style="left:873px;top:634px;width:5px;height:1px;background:#d4d4d4"></div>
<div class="abs" style="left:892px;top:602px;width:12px;height:1px;background:#c4c4c4"></div>
<svg class="abs" style="left:982px;top:694px" width="10" height="10" viewBox="0 0 10 10"><g fill="#b4b4b4"><rect x="6" y="1" width="1.500" height="1.500"/><rect x="6" y="4" width="1.500" height="1.500"/><rect x="6" y="7" width="1.500" height="1.500"/><rect x="3" y="4" width="1.500" height="1.500"/><rect x="3" y="7" width="1.500" height="1.500"/><rect x="0" y="7" width="1.500" height="1.500"/></g></svg>
<!-- ===== IME bar ===== -->
<div class="abs" style="left:535px;top:690px;width:144px;height:26px;background:#f8f8f8;border:1px solid #dcdcdc;border-radius:4px;box-shadow:0 0 2px rgba(0,0,0,.18)"></div>
<div class="abs" style="left:540px;top:693px;width:16px;height:16px;background:#fff;border:1.500px solid #e0604e;font-size:10.500px;line-height:12.500px;text-align:center;color:#222;font-weight:bold">五</div>
<div class="abs" style="left:561px;top:691.500px;font-size:13.500px;line-height:17px;color:#5e5e5e;font-weight:500">中</div>
<svg class="abs" style="left:578px;top:692px" width="98" height="18" viewBox="578 692 98 18">
<path d="M590.500 695.300a6.300 6.300 0 1 1-9.300 8.200a7.600 7.600 0 0 0 9.300-8.200z" fill="#5e5e5e"/>
<circle cx="603.700" cy="701.300" r="1.500" fill="none" stroke="#666" stroke-width="1"/><path d="M609.200 701a1.500 1.500 0 1 1 2.200 1.500l-1.300 2.700h-0.900l0.800-2.900a1.500 1.500 0 0 1-0.800-1.300z" fill="#666"/>
<rect x="620" y="697" width="14.300" height="9" rx="1.300" fill="#5e5e5e"/><path d="M622 700h10.300M622 703h10.300" stroke="#e4e4e4" stroke-width="1.100"/>
<circle cx="646" cy="698.200" r="2.900" fill="#5e5e5e"/><path d="M641 706.600v-2.600a5 3.600 0 0 1 10 0v2.600z" fill="#5e5e5e"/>
<path d="M660.500 705.200l5.300-5.300a3.700 3.700 0 0 1 4.700-4.600l-2.300 2.300l0.700 1.900l1.900 0.700l2.300-2.300a3.700 3.700 0 0 1-4.600 4.700l-5.300 5.300a1.400 1.400 0 0 1-2.700-2.700z" fill="#5e5e5e"/>
</svg>
</body>
</html>
